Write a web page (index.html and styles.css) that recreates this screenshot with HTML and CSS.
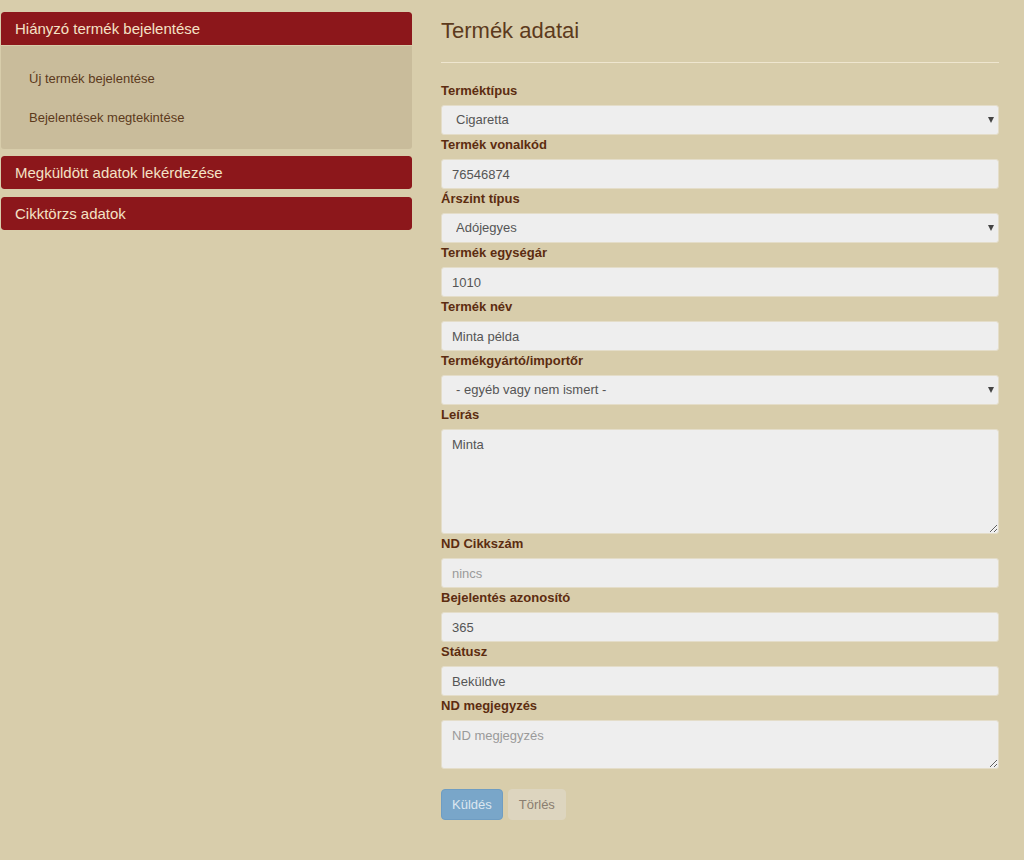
FILE: index.html
```html
<!DOCTYPE html>
<html lang="hu">
<head>
<meta charset="utf-8">
<title>Termék adatai</title>
<link rel="stylesheet" href="styles.css">
</head>
<body>
<div class="page">
  <aside class="sidebar">
    <div class="panel">
      <div class="panel-heading">Hiányzó termék bejelentése</div>
      <ul class="submenu">
        <li>Új termék bejelentése</li>
        <li>Bejelentések megtekintése</li>
      </ul>
    </div>
    <div class="panel gap7">
      <div class="panel-heading">Megküldött adatok lekérdezése</div>
    </div>
    <div class="panel gap8">
      <div class="panel-heading">Cikktörzs adatok</div>
    </div>
  </aside>
  <main class="content">
    <h3 class="title">Termék adatai</h3>
    <hr class="divider">
    <form class="form">
      <label class="label">Terméktípus</label>
      <div class="select-wrap">
        <select class="control select"><option>Cigaretta</option></select>
        <span class="caret"></span>
      </div>
      <label class="label">Termék vonalkód</label>
      <input class="control" type="text" value="76546874">
      <label class="label">Árszint típus</label>
      <div class="select-wrap">
        <select class="control select"><option>Adójegyes</option></select>
        <span class="caret"></span>
      </div>
      <label class="label">Termék egységár</label>
      <input class="control" type="text" value="1010">
      <label class="label">Termék név</label>
      <input class="control" type="text" value="Minta példa">
      <label class="label">Termékgyártó/importőr</label>
      <div class="select-wrap">
        <select class="control select"><option>- egyéb vagy nem ismert -</option></select>
        <span class="caret"></span>
      </div>
      <label class="label">Leírás</label>
      <textarea class="control textarea tall">Minta</textarea>
      <label class="label">ND Cikkszám</label>
      <input class="control" type="text" placeholder="nincs">
      <label class="label">Bejelentés azonosító</label>
      <input class="control" type="text" value="365">
      <label class="label">Státusz</label>
      <input class="control" type="text" value="Beküldve">
      <label class="label">ND megjegyzés</label>
      <textarea class="control textarea short" placeholder="ND megjegyzés"></textarea>
      <div class="buttons">
        <button type="button" class="btn btn-primary">Küldés</button>
        <button type="button" class="btn btn-default">Törlés</button>
      </div>
    </form>
  </main>
</div>
</body>
</html>
```

FILE: styles.css
```css
html, body {
  margin: 0;
  padding: 0;
  background: #d8cdab;
  font-family: "Liberation Sans", Arial, sans-serif;
  color: #5c3a1c;
}

.page {
  display: flex;
  align-items: flex-start;
  padding-left: 1px;
  gap: 29px;
}

.sidebar {
  width: 411px;
  padding-top: 12px;
}

.panel {
  border-radius: 3px;
  overflow: hidden;
}

.gap7 { margin-top: 7px; }
.gap8 { margin-top: 8px; }

.panel-heading {
  background: #8c171b;
  color: #f4e2c6;
  font-size: 15px;
  line-height: 18px;
  height: 33px;
  box-sizing: border-box;
  padding: 8px 14px 7px;
  border-radius: 3px 3px 0 0;
}

.gap7 .panel-heading,
.gap8 .panel-heading {
  border-radius: 3px;
}

.submenu {
  list-style: none;
  margin: 0;
  padding: 13px 0 12px;
  background: #c9bc9b;
  border-top: 1px solid #d8cdab;
}

.submenu li {
  font-size: 13px;
  line-height: 19px;
  padding: 10px 28px;
  color: #5c3a1c;
}

.content {
  width: 558px;
}

.title {
  margin: 19px 0 0;
  font-size: 22px;
  font-weight: normal;
  line-height: 24px;
  color: #5c3a1c;
}

.divider {
  margin: 19px 0 18px;
  border: 0;
  border-top: 1px solid #efe6cf;
  height: 0;
}

.form {
  display: flex;
  flex-direction: column;
}

.label {
  font-size: 13px;
  font-weight: bold;
  line-height: 19px;
  margin-bottom: 5px;
  color: #5c2c10;
}

.control {
  display: block;
  width: 100%;
  box-sizing: border-box;
  height: 30px;
  margin: 0;
  padding: 5px 10px;
  font-family: "Liberation Sans", Arial, sans-serif;
  font-size: 13px;
  line-height: 18px;
  color: #555555;
  background: #eeeeee;
  border: 1px solid #e4ddc9;
  border-radius: 3px;
  outline: none;
}

.control::placeholder {
  color: #9a9a9a;
}

.select-wrap {
  position: relative;
}

.select {
  -webkit-appearance: none;
  appearance: none;
  padding-left: 14px;
}

.caret {
  position: absolute;
  right: 5px;
  top: 12px;
  width: 0;
  height: 0;
  border-left: 3px solid transparent;
  border-right: 3px solid transparent;
  border-top: 6px solid #444444;
}

.textarea {
  resize: vertical;
  padding: 6px 10px;
}

.textarea.tall { height: 105px; }
.textarea.short { height: 49px; }

.buttons {
  display: flex;
  gap: 5px;
  margin-top: 20px;
}

.btn {
  height: 31px;
  padding: 5px 10px;
  font-family: "Liberation Sans", Arial, sans-serif;
  font-size: 13px;
  line-height: 18px;
  border-radius: 4px;
  cursor: default;
}

.btn-primary {
  background: #79a6c9;
  border: 1px solid #6f9dc2;
  color: #dce7f0;
}

.btn-default {
  background: #ddd5bf;
  border: 1px solid #ddd5bf;
  color: #8a7e70;
}
```
